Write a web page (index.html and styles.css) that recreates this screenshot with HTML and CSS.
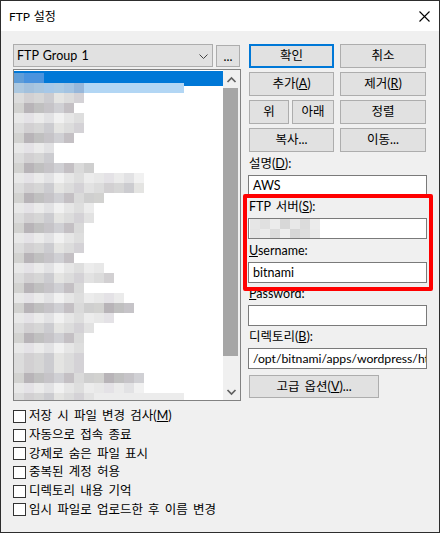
FILE: index.html
```html
<!DOCTYPE html>
<html lang="ko">
<head>
<meta charset="utf-8">
<title>FTP 설정</title>
<link rel="stylesheet" href="styles.css">
</head>
<body>
<div class="window">
  <div class="titlebar">
    <span class="title">FTP 설정</span>
    <svg class="close" width="11" height="11" viewBox="0 0 11 11"><path d="M0.5 0.5 L10.5 10.5 M10.5 0.5 L0.5 10.5" stroke="#000" stroke-width="1.1" fill="none"/></svg>
  </div>
  <div class="content">
    <div class="left">
      <div class="combo-row">
        <div class="combo"><span>FTP Group 1</span><svg width="9" height="5" viewBox="0 0 9 5"><polyline points="0.5,0.5 4.5,4.5 8.5,0.5" stroke="#444" stroke-width="1" fill="none"/></svg></div>
        <div class="btn dots">...</div>
      </div>
      <div class="list">
        <div class="items">
          <div class="sel"></div>
          <div class="mosaic">
            <div class="row r0" style="width:30px"></div>
            <div class="row r1" style="width:170px"></div>
            <div class="row t-m" style="width:70px"></div>
            <div class="row t-d" style="width:60px"></div>
            <div class="row t-l" style="width:70px"></div>
            <div class="row t-m" style="width:70px"></div>
            <div class="row t-d" style="width:60px"></div>
            <div class="row t-l" style="width:40px"></div>
            <div class="row t-m" style="width:40px"></div>
            <div class="row t-d" style="width:80px"></div>
            <div class="row t-l" style="width:130px"></div>
            <div class="row t-m" style="width:130px"></div>
            <div class="row t-d" style="width:90px"></div>
            <div class="row t-l" style="width:80px"></div>
            <div class="row t-m" style="width:80px"></div>
            <div class="row t-d" style="width:70px"></div>
            <div class="row t-l" style="width:70px"></div>
            <div class="row t-m" style="width:70px"></div>
            <div class="row t-d" style="width:60px"></div>
            <div class="row t-l" style="width:90px"></div>
            <div class="row t-m" style="width:100px"></div>
            <div class="row t-d" style="width:70px"></div>
            <div class="row t-l" style="width:110px"></div>
            <div class="row t-d" style="width:120px"></div>
            <div class="row t-l" style="width:100px"></div>
            <div class="row t-m" style="width:80px"></div>
            <div class="row t-d" style="width:70px"></div>
            <div class="row t-l" style="width:70px"></div>
            <div class="row t-m" style="width:70px"></div>
            <div class="row t-m" style="width:70px"></div>
            <div class="row t-d" style="width:130px"></div>
            <div class="row t-l" style="width:130px"></div>
            <div class="row last"><span class="t-m" style="width:80px"></span><span class="tail" style="width:90px"></span></div>
          </div>
        </div>
        <div class="scrollbar">
          <div class="arrow"><svg width="17" height="17" viewBox="0 0 17 17"><polyline points="4.5,12 8.5,8 12.5,12" stroke="#606060" stroke-width="1.7" fill="none"/></svg></div>
          <div class="track"><div class="thumb"></div></div>
          <div class="arrow"><svg width="17" height="17" viewBox="0 0 17 17"><polyline points="4.5,7 8.5,11 12.5,7" stroke="#606060" stroke-width="1.7" fill="none"/></svg></div>
        </div>
      </div>
    </div>
    <div class="right">
      <div class="btn-grid">
        <div class="btn default">확인</div>
        <div class="btn">취소</div>
        <div class="btn">추가(<u>A</u>)</div>
        <div class="btn">제거(<u>R</u>)</div>
        <div class="pair"><div class="btn">위</div><div class="btn">아래</div></div>
        <div class="btn">정렬</div>
        <div class="btn">복사...</div>
        <div class="btn">이동...</div>
      </div>
      <div class="fields">
        <div class="field"><div class="label">설명(<u>D</u>):</div><div class="input">AWS</div></div>
        <div class="field"><div class="label">FTP 서버(<u>S</u>):</div><div class="input blur"><div class="blur-box"></div></div></div>
        <div class="field user"><div class="label"><u>U</u>sername:</div><div class="input">bitnami</div></div>
        <div class="field"><div class="label"><u>P</u>assword:</div><div class="input"></div></div>
        <div class="field"><div class="label">디렉토리(<u>B</u>):</div><div class="input dir">/opt/bitnami/apps/wordpress/htdocs</div></div>
      </div>
      <div class="btn adv">고급 옵션(<u>V</u>)...</div>
    </div>
  </div>
  <div class="checks">
    <div class="check"><span class="box"></span>저장 시 파일 변경 검사(<u>M</u>)</div>
    <div class="check"><span class="box"></span>자동으로 접속 종료</div>
    <div class="check"><span class="box"></span>강제로 숨은 파일 표시</div>
    <div class="check"><span class="box"></span>중복된 계정 허용</div>
    <div class="check"><span class="box"></span>디렉토리 내용 기억</div>
    <div class="check"><span class="box"></span>임시 파일로 업로드한 후 이름 변경</div>
  </div>
  <div class="annot"></div>
</div>
</body>
</html>
```
FILE: styles.css
```css
html, body {
  margin: 0;
  padding: 0;
  background: #f0f0f0;
}

.window {
  position: relative;
  width: 440px;
  height: 533px;
  box-sizing: border-box;
  border: 1px solid #2d2d2d;
  background: #f0f0f0;
  font-family: Lato, "Noto Sans CJK KR", sans-serif;
  font-size: 12.5px;
  word-spacing: 2px;
  line-height: 16px;
  color: #000;
}

u {
  text-decoration: underline;
  text-underline-offset: 1px;
}

.titlebar {
  height: 30px;
  background: #fff;
  display: flex;
  align-items: center;
  justify-content: space-between;
  padding: 0 9px 0 8px;
  font-size: 12px;
  word-spacing: 1px;
}

.title {
  padding-top: 1px;
}

.close {
  display: block;
}

.content {
  display: grid;
  grid-template-columns: 228px 179px;
  column-gap: 7px;
  padding: 13px 0 0 12px;
  align-items: start;
}

.combo-row {
  display: flex;
  gap: 3px;
  height: 23px;
}

.combo {
  width: 200px;
  box-sizing: border-box;
  border: 1px solid #adadad;
  background: #e1e1e1;
  display: flex;
  align-items: center;
  justify-content: space-between;
  padding: 0 4px 0 3px;
  word-spacing: 1px;
}

.combo svg {
  display: block;
  margin-top: 1px;
}

.btn {
  box-sizing: border-box;
  border: 1px solid #adadad;
  background: #e1e1e1;
  display: flex;
  align-items: center;
  justify-content: center;
  white-space: nowrap;
}

.btn.default {
  border: 2px solid #0078d7;
}

.dots {
  width: 24px;
  height: 22px;
  margin-top: 1px;
  align-items: flex-end;
  padding-bottom: 3px;
  line-height: 12px;
}

.list {
  margin-top: 2px;
  height: 332px;
  box-sizing: border-box;
  border: 1px solid #828282;
  background: #fff;
  display: flex;
}

.items {
  position: relative;
  flex: 1;
  overflow: hidden;
}

.sel {
  position: absolute;
  top: 1px;
  left: 0;
  width: 209px;
  height: 15px;
  background: #0078d7;
}

.mosaic {
  position: relative;
  padding-top: 3px;
}

.row {
  height: 10px;
}

.row.last {
  display: flex;
}

.row.last span {
  display: block;
  height: 10px;
}

.r0 {
  background: linear-gradient(90deg, #5f9dd8 0 10px, #4a93de 10px 30px);
}

.r1 {
  background: linear-gradient(90deg, #acc8e0 0 10px, #a3c1dd 10px 20px, #a8c6e0 20px 30px, #a6c8e8 30px 40px, #aacae4 40px 50px, #a4c4e2 50px 60px, #97b7da 60px 70px, #b2d6f4 70px 170px);
}

.t-l {
  background: repeating-linear-gradient(90deg, #e8e8e8 0 10px, #e4e2e6 10px 20px, #ebebeb 20px 30px, #e2e2e4 30px 40px, #f1f1f1 40px 50px, #e6e6e6 50px 60px, #dedede 60px 70px, #ececec 70px 80px);
}

.t-m {
  background: repeating-linear-gradient(90deg, #dcdcdc 0 10px, #d2d0d2 10px 20px, #d6d6d6 20px 30px, #ccccd0 30px 40px, #e4e4e2 40px 50px, #dcdcdc 50px 60px, #d4d2d6 60px 70px, #e2e2e2 70px 80px);
}

.t-d {
  background: repeating-linear-gradient(90deg, #d2d2d0 0 10px, #b8b4b8 10px 20px, #c0c0c0 20px 30px, #c6c4c8 30px 40px, #d0d0d4 40px 50px, #c4c0c4 50px 60px, #dadada 60px 70px, #cfcfcf 70px 80px);
}

.tail {
  background: #ececec;
}

.scrollbar {
  width: 17px;
  background: #f0f0f0;
  display: flex;
  flex-direction: column;
}

.arrow {
  height: 17px;
}

.arrow svg {
  display: block;
}

.track {
  flex: 1;
}

.thumb {
  margin-top: 1px;
  width: 15px;
  height: 268px;
  background: #a6a6a6;
}

.btn-grid {
  display: grid;
  grid-template-columns: 85px 86px;
  column-gap: 6px;
  row-gap: 4px;
  grid-auto-rows: 24px;
  margin-left: 1px;
}

.pair {
  display: grid;
  grid-template-columns: 40px 42px;
  column-gap: 3px;
}

.fields {
  margin-top: 1px;
}

.field.user {
  margin-top: 1px;
}

.label {
  height: 22px;
  line-height: 22px;
  padding-left: 1px;
  white-space: nowrap;
}

.input {
  height: 21px;
  box-sizing: border-box;
  border: 1px solid #7a7a7a;
  background: #fff;
  padding: 0 4px;
  line-height: 19px;
  white-space: nowrap;
  overflow: hidden;
}

.input.dir {
  font-size: 12.2px;
}

.input.blur {
  padding: 0 1px;
  display: flex;
  align-items: center;
}

.blur-box {
  width: 70px;
  height: 19px;
  background:
    linear-gradient(90deg, #e6e6e6 0 10px, #e0e0e0 10px 20px, #ececec 20px 30px, #d8d8d8 30px 40px, #e8e8e8 40px 50px, #dcdcdc 50px 60px, #ececec 60px 70px) top / 70px 10px no-repeat,
    linear-gradient(90deg, #e4e4e4 0 10px, #ebebeb 10px 20px, #dcdcdc 20px 30px, #eeeeee 30px 40px, #d6d6d6 40px 50px, #dedede 50px 60px, #eaeaea 60px 70px) bottom / 70px 9px no-repeat;
}

.btn.adv {
  margin-top: 6px;
  margin-left: 1px;
  width: 130px;
  height: 23px;
}

.checks {
  margin-top: 6px;
  padding-left: 12px;
}

.check {
  height: 18.7px;
  display: flex;
  align-items: center;
  white-space: nowrap;
}

.box {
  width: 13px;
  height: 13px;
  box-sizing: border-box;
  border: 1px solid #333;
  background: #fff;
  margin-right: 3px;
  flex: none;
}

.annot {
  position: absolute;
  left: 242px;
  top: 193px;
  width: 190px;
  height: 97px;
  box-sizing: border-box;
  border: 4px solid #ff0000;
  border-radius: 2px;
}
```
